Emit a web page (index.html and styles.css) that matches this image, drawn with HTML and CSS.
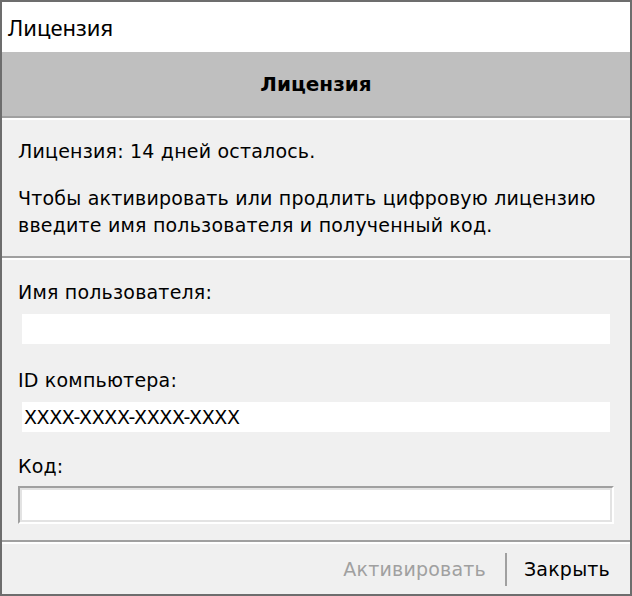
FILE: index.html
```html
<!DOCTYPE html>
<html lang="ru">
<head>
<meta charset="utf-8">
<title>Лицензия</title>
<link rel="stylesheet" href="styles.css">
</head>
<body>
<div class="window">
  <div class="titlebar">Лицензия</div>
  <div class="header">Лицензия</div>
  <div class="sep"></div>
  <div class="info">
    <p class="line">Лицензия: 14 дней осталось.</p>
    <p class="para">Чтобы активировать или продлить цифровую лицензию<br>введите имя пользователя и полученный код.</p>
  </div>
  <div class="sep"></div>
  <div class="form">
    <div class="label">Имя пользователя:</div>
    <div class="field"></div>
    <div class="label l2">ID компьютера:</div>
    <div class="field id">XXXX-XXXX-XXXX-XXXX</div>
    <div class="label l3">Код:</div>
    <div class="code"><div class="code-inner"></div></div>
  </div>
  <div class="sep"></div>
  <div class="footer">
    <span class="btn disabled">Активировать</span>
    <span class="vsep"></span>
    <span class="btn">Закрыть</span>
  </div>
</div>
</body>
</html>
```
FILE: styles.css
```css
* { box-sizing: border-box; }
html, body { margin: 0; padding: 0; }
body {
  width: 632px;
  height: 596px;
  font-family: "DejaVu Sans", "Liberation Sans", sans-serif;
  color: #000;
}
.window {
  width: 632px;
  height: 596px;
  border: 2px solid #6d6d6d;
  background: #f0f0f0;
  display: flex;
  flex-direction: column;
  font-size: 19px;
  letter-spacing: 0.2px;
}
.titlebar {
  height: 50px;
  background: #fff;
  font-family: "Noto Sans", "Open Sans", sans-serif;
  font-size: 22px;
  letter-spacing: 0;
  line-height: 50px;
  padding-left: 6px;
  color: #000;
}
.header {
  height: 64px;
  background: #bfbfbf;
  font-weight: bold;
  font-size: 20px;
  letter-spacing: 0;
  line-height: 64px;
  text-align: center;
}
.sep {
  height: 4px;
  border-top: 2px solid #a0a0a0;
  border-bottom: 2px solid #fff;
  flex: none;
}
.info {
  height: 136px;
  padding: 18px 16px 0;
  line-height: 27px;
}
.info p { margin: 0; white-space: nowrap; }
.info .para { margin-top: 20px; }
.form {
  height: 280px;
  padding: 19px 16px 0;
  display: flex;
  flex-direction: column;
}
.label { line-height: 26px; height: 26px; }
.field {
  margin: 9px 4px 0;
  height: 30px;
  background: #fff;
  line-height: 30px;
  padding-left: 2px;
}
.field.id { letter-spacing: -0.4px; }
.label.l2 { margin-top: 23px; }
.label.l3 { margin-top: 21px; }
.code {
  margin-top: 7px;
  height: 38px;
  border-style: solid;
  border-width: 2px;
  border-color: #a0a0a0 #fff #fff #a0a0a0;
}
.code-inner {
  height: 100%;
  border-style: solid;
  border-width: 2px;
  border-color: #e3e3e3;
  background: #fff;
}
.footer {
  flex: 1;
  display: flex;
  align-items: center;
  justify-content: flex-end;
  padding-right: 20px;
}
.btn { line-height: 26px; white-space: nowrap; }
.btn.disabled { color: #a0a0a0; }
.vsep {
  width: 2px;
  height: 33px;
  background: #a0a0a0;
  margin: 0 17px 0 19px;
}
```
